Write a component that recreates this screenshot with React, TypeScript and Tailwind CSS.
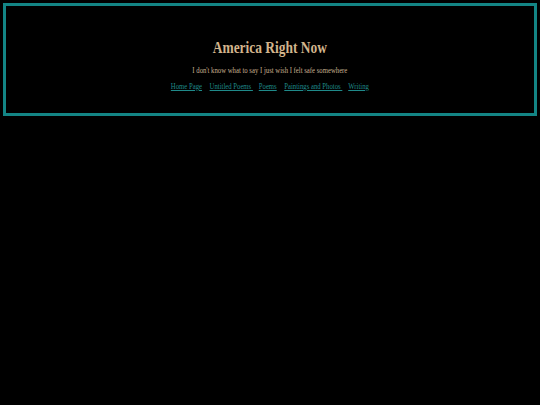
export default function App() {
  return (
    <div className="min-h-[405px] bg-black p-[3px] font-['Liberation_Serif',serif]">
      <div className="h-[113px] border-[3px] border-[#138585] flex flex-col items-center pt-[33px]">
        <div className="flex flex-col items-center scale-x-[0.84] origin-center">
          <h1 className="text-[16px] font-bold text-[#d2b48c] leading-[18px]">America Right Now</h1>
          <p className="mt-[9px] text-[8px] text-[#c8b090] leading-[10px]">I don't know what to say I just wish I felt safe somewhere</p>
          <div className="mt-[6px] flex text-[8px] leading-[10px] text-[#1f8a8a]">
            <a className="underline">Home Page</a>
            <a className="ml-[9px] underline">Untitled Poems&nbsp;</a>
            <a className="ml-[7px] underline">Poems</a>
            <a className="ml-[9px] underline">Paintings and Photos&nbsp;</a>
            <a className="ml-[7px] underline">Writing</a>
          </div>
        </div>
      </div>
    </div>
  );
}
